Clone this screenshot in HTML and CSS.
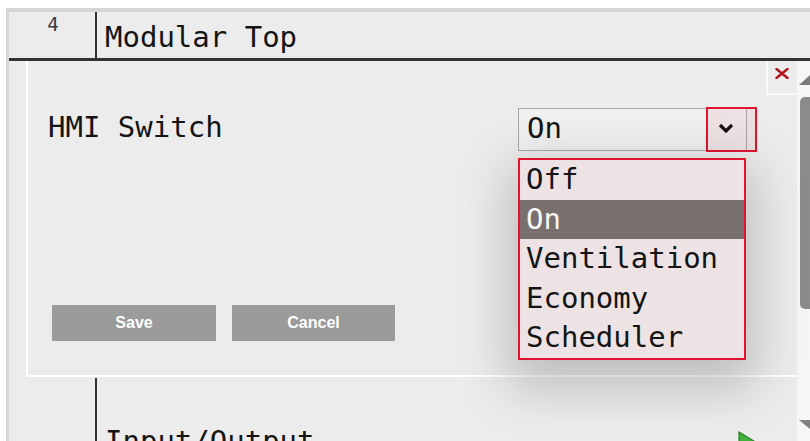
FILE: index.html
```html
<!DOCTYPE html>
<html lang="en">
<head>
<meta charset="utf-8">
<title>Modular Top</title>
<link rel="stylesheet" href="styles.css">
</head>
<body>
<div class="grid">
  <div class="head">
    <div class="num">4</div>
    <div class="title">Modular Top</div>
  </div>
  <div class="body">
    <div class="content">
      <div class="dialog">
        <div class="dialog-top">
          <div class="close" title="Close">
            <svg width="14" height="11" viewBox="0 0 14 11"><path d="M1.5 1 L12.5 10 M12.5 1 L1.5 10" stroke="#b3121c" stroke-width="2.4" stroke-linecap="round"/></svg>
          </div>
        </div>
        <div class="field">
          <div class="label">HMI Switch</div>
          <div class="select">
            <div class="value">On</div>
            <div class="arrow">
              <svg width="16" height="10" viewBox="0 0 16 10"><path d="M2 2 L8 8 L14 2" fill="none" stroke="#111" stroke-width="3.2" stroke-linejoin="miter"/></svg>
            </div>
            <div class="mark"></div>
            <ul class="options">
              <li>Off</li>
              <li class="selected">On</li>
              <li>Ventilation</li>
              <li>Economy</li>
              <li>Scheduler</li>
            </ul>
          </div>
        </div>
        <div class="actions">
          <button class="btn save">Save</button>
          <button class="btn cancel">Cancel</button>
        </div>
      </div>
      <div class="row next">
        <div class="num"></div>
        <div class="title">Input/Output</div>
        <svg class="play" width="17" height="20" viewBox="0 0 17 20"><polygon points="1,1 16,10 1,19" fill="#3fb03a" stroke="#2a8427" stroke-width="1.2"/></svg>
      </div>
    </div>
    <div class="scrollbar">
      <svg class="up" width="22" height="10" viewBox="0 0 22 10"><polygon points="0,10 11,0 22,10" fill="#7c7c7c"/></svg>
      <div class="thumb"></div>
      <svg class="down" width="22" height="9" viewBox="0 0 22 9"><polygon points="0,0 22,0 11,9" fill="#808080"/></svg>
    </div>
  </div>
</div>
</body>
</html>
```

FILE: styles.css
```css
html, body {
  margin: 0;
  padding: 0;
  width: 810px;
  height: 441px;
  overflow: hidden;
  background: #ffffff;
}

.grid {
  margin: 8px 0 0 6px;
  width: 817px;
  height: 433px;
  box-sizing: border-box;
  border-top: 4px solid #d6d6d6;
  border-left: 3px solid #d6d6d6;
  background: #ececec;
  display: flex;
  flex-direction: column;
  font-family: "DejaVu Sans Mono", monospace;
  color: #141414;
}

/* header row */
.head {
  display: flex;
  height: 49px;
  box-sizing: border-box;
  border-bottom: 3px solid #333333;
  flex: none;
}

.num {
  width: 86px;
  flex: none;
  text-align: center;
  font-size: 19px;
  line-height: 22px;
  color: #3a3a3a;
  padding-top: 1px;
  padding-left: 2px;
  box-sizing: border-box;
}

.title {
  border-left: 2px solid #333333;
  padding-left: 8px;
  font-size: 29px;
  line-height: 42px;
  padding-top: 4px;
  flex: 1;
}

/* area under the header */
.body {
  flex: 1;
  display: flex;
  min-height: 0;
}

.content {
  width: 788px;
  flex: none;
  display: flex;
  flex-direction: column;
}

.dialog {
  margin-left: 17px;
  height: 316px;
  box-sizing: border-box;
  border-left: 2px solid #ffffff;
  border-bottom: 2px solid #ffffff;
  display: flex;
  flex-direction: column;
  flex: none;
}

.dialog-top {
  display: flex;
  justify-content: flex-end;
}

.close {
  width: 31px;
  height: 34px;
  box-sizing: border-box;
  border-left: 2px solid #fafafa;
  border-bottom: 2px solid #fafafa;
  display: flex;
  justify-content: center;
  padding-top: 7px;
  padding-right: 1px;
}

.field {
  margin-top: 13px;
  padding-left: 20px;
  display: grid;
  grid-template-columns: 470px 229px;
  align-items: start;
}

.label {
  font-size: 29px;
  line-height: 38px;
}

.select {
  position: relative;
  height: 43px;
  box-sizing: border-box;
  border: 1px solid #a9a9a9;
  background: #efefef;
  display: flex;
}

.select .value {
  flex: 1;
  padding-left: 8px;
  font-size: 29px;
  line-height: 38px;
}

.select .arrow {
  width: 30px;
  display: flex;
  justify-content: center;
  align-items: flex-start;
  padding-top: 14px;
  padding-right: 5px;
}

/* highlight around the arrow button */
.select .mark {
  position: absolute;
  left: 187px;
  top: -2px;
  width: 51px;
  height: 45px;
  box-sizing: border-box;
  border: 2px solid #e2132e;
  background: rgba(226, 19, 46, 0.06);
}

/* open option list */
.options {
  position: absolute;
  left: -1px;
  top: 49px;
  width: 228px;
  margin: 0;
  padding: 0;
  list-style: none;
  box-sizing: border-box;
  border: 2px solid #e2132e;
  background: #ede3e4;
  box-shadow: 0 18px 48px 10px rgba(0, 0, 0, 0.2);
  z-index: 2;
}

.options li {
  height: 39.6px;
  line-height: 39.6px;
  padding-left: 6px;
  font-size: 29px;
  color: #141414;
}

.options li.selected {
  background: #7a6f6f;
  color: #f7f7f7;
}

.actions {
  margin-top: 154px;
  padding-left: 24px;
  display: flex;
  gap: 16px;
}

.btn {
  height: 36px;
  border: none;
  background: #9b9b9b;
  color: #ffffff;
  font-family: "Liberation Sans", Arial, sans-serif;
  font-size: 16px;
  font-weight: bold;
  padding: 0;
}

.btn.save { width: 164px; }
.btn.cancel { width: 163px; }

/* next table row */
.next {
  display: flex;
  margin-top: 1px;
  margin-right: 4px;
  flex: 1;
}

.next .title {
  padding-top: 42px;
}

.next .play {
  flex: none;
  margin-top: 53px;
  margin-right: 38px;
}

/* vertical scrollbar */
.scrollbar {
  width: 26px;
  flex: none;
  background: #f6f6f6;
  display: flex;
  flex-direction: column;
  align-items: center;
}

.scrollbar .up {
  margin-top: 14px;
  flex: none;
}

.scrollbar .thumb {
  margin-top: 12px;
  width: 20px;
  height: 212px;
  border-radius: 5px;
  background: #8b8b8b;
  flex: none;
}

.scrollbar .down {
  margin-top: 111px;
  flex: none;
}
```
